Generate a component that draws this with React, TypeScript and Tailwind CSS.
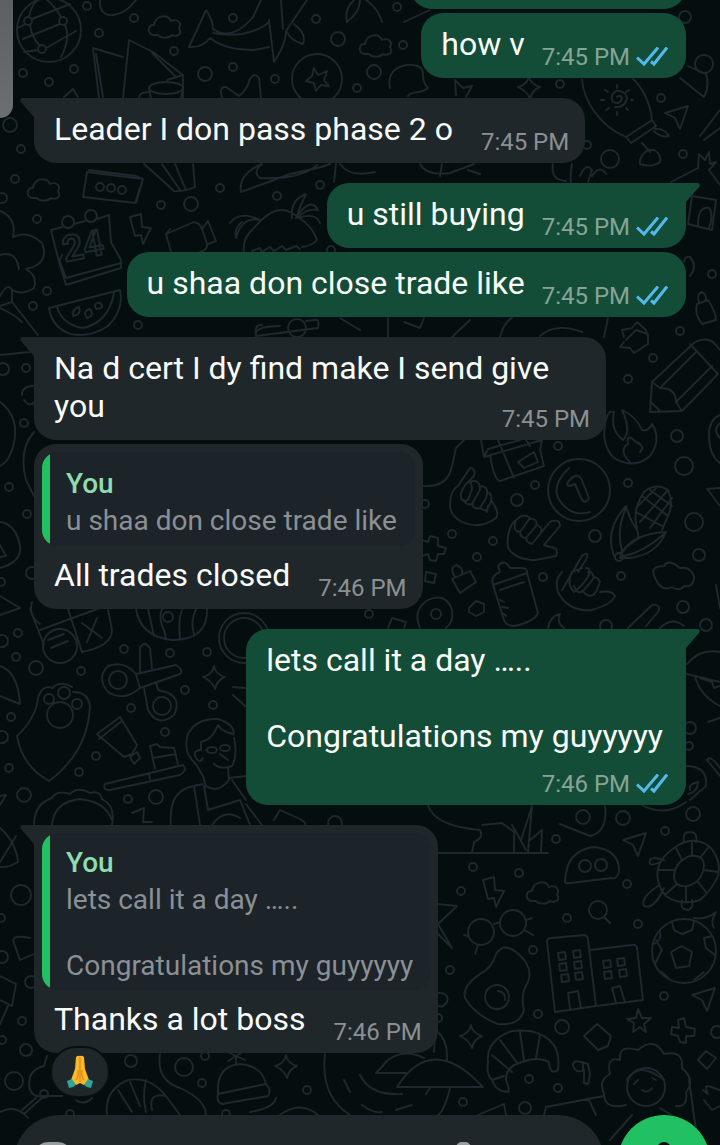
// src/App.tsx
import type { ReactNode } from 'react'

type Message = {
  id: number
  mine: boolean
  text: string
  time: string
  tail?: boolean
  stacked?: boolean
  quote?: string
  reaction?: boolean
}

const GROUPS: Message[][] = [
  [{ id: 1, mine: true, text: 'how v', time: '7:45 PM' }],
  [{ id: 2, mine: false, tail: true, text: 'Leader I don pass phase 2 o', time: '7:45 PM' }],
  [
    { id: 3, mine: true, tail: true, text: 'u still buying', time: '7:45 PM' },
    { id: 4, mine: true, text: 'u shaa don close trade like', time: '7:45 PM' },
  ],
  [
    { id: 5, mine: false, tail: true, text: 'Na d cert I dy find make I send give you', time: '7:45 PM' },
    { id: 6, mine: false, quote: 'u shaa don close trade like', text: 'All trades closed', time: '7:46 PM' },
  ],
  [{ id: 7, mine: true, tail: true, stacked: true, text: 'lets call it a day …..\n\nCongratulations my guyyyyy', time: '7:46 PM' }],
  [{ id: 8, mine: false, tail: true, reaction: true, quote: 'lets call it a day …..\n\nCongratulations my guyyyyy', text: 'Thanks a lot boss', time: '7:46 PM' }],
]

// cx, cy, r
const DOTS: [number, number, number][] = [
  [87, 6, 4], [134, 18, 4], [99, 33, 4], [174, 51, 4], [23, 73, 4], [74, 69, 4], [49, 82, 4], [205, 74, 7], [233, 67, 4],
  [275, 79, 4], [338, 39, 7], [316, 19, 4], [233, 18, 4], [10, 125, 7], [21, 149, 4], [15, 179, 4], [37, 219, 4],
  [161, 205, 4], [191, 204, 7], [220, 188, 4], [320, 185, 4], [277, 196, 4], [47, 291, 4], [33, 306, 4], [138, 325, 4],
  [357, 88, 4], [2, 198, 5], [331, 250, 4], [397, 7, 4], [403, 45, 4], [374, 72, 7], [560, 84, 4], [661, 98, 4], [685, 17, 6],
  [704, 64, 9], [587, 145, 4], [610, 159, 9], [683, 154, 4], [712, 274, 4], [680, 331, 4], [3, 369, 6], [26, 368, 4],
  [24, 423, 4], [9, 487, 4], [27, 514, 4], [32, 573, 6], [1, 582, 4], [653, 358, 4], [628, 379, 4], [677, 436, 6],
  [684, 466, 9], [558, 446, 4], [535, 485, 4], [517, 500, 6], [425, 504, 4], [452, 534, 4], [493, 541, 4], [477, 557, 4],
  [543, 577, 4], [628, 483, 4], [595, 536, 6], [694, 522, 9], [699, 555, 6], [621, 576, 4], [683, 607, 6], [369, 614, 4],
  [606, 626, 6], [706, 625, 6], [2, 641, 6], [18, 633, 4], [16, 657, 4], [36, 668, 7], [81, 671, 4], [124, 649, 4],
  [170, 653, 4], [207, 652, 4], [185, 690, 4], [131, 708, 4], [213, 705, 4], [11, 717, 4], [2, 737, 6], [9, 768, 4],
  [24, 795, 7], [96, 756, 4], [79, 772, 4], [128, 799, 4], [156, 797, 7], [165, 732, 4], [335, 823, 7], [583, 817, 7],
  [623, 818, 7], [693, 814, 7], [690, 728, 6], [689, 746, 4], [556, 839, 4], [665, 831, 4], [473, 867, 4], [519, 873, 4],
  [461, 891, 4], [567, 918, 4], [627, 884, 4], [638, 924, 4], [533, 950, 4], [450, 970, 4], [664, 996, 4], [538, 1014, 4],
  [562, 1027, 7], [529, 1079, 4], [558, 1088, 4], [463, 1102, 4], [525, 1108, 6], [717, 1032, 6], [438, 1018, 4],
  [21, 895, 10], [1, 918, 4], [31, 982, 6], [2, 957, 6], [22, 1021, 4], [2, 1040, 4], [26, 1050, 6], [14, 1081, 9],
  [131, 1061, 6], [184, 1067, 9], [205, 1056, 4], [202, 1083, 4], [307, 1090, 4], [226, 1114, 4], [70, 1114, 4],
]

const CLOUDS: [number, number][] = [[148, 15], [359, 34], [27, 178], [526, 881]]
const BOLTS: [number, number][] = [[129, 214], [482, 877]]
const STARS: [number, number][] = [[518, 76], [203, 666], [275, 1055], [460, 1025]]
const PLANES: [number, number][] = [[664, 106], [622, 833], [691, 988]]

function Wallpaper() {
  return (
    <svg
      aria-hidden="true"
      viewBox="0 0 720 1145"
      preserveAspectRatio="xMidYMin slice"
      className="absolute inset-0 h-full w-full"
      fill="none"
      stroke="#1e282d"
      strokeWidth="1.9"
      strokeLinecap="round"
      strokeLinejoin="round"
    >
      {DOTS.map(([cx, cy, r]) => <circle key={`${cx}-${cy}`} cx={cx} cy={cy} r={r} />)}
      {CLOUDS.map(([x, y]) => (
        <path key={x} transform={`translate(${x} ${y})`} d="M6 20C-1 20-1 9 6 10C7 1 19-2 23 6C30 3 34 9 31 13C35 20 28 22 24 20C20 24 12 23 10 20Z" />
      ))}
      {BOLTS.map(([x, y]) => (
        <path key={x} transform={`translate(${x} ${y})`} d="M1 3L12 0L13 13L22 14L14 30L12 21L6 22Z" />
      ))}
      {STARS.map(([x, y]) => (
        <path key={x} transform={`translate(${x} ${y})`} d="M11 0Q12 8 22 11Q14 14 12 23Q9 15 0 11Q9 9 11 0Z" />
      ))}
      {PLANES.map(([x, y]) => (
        <path key={x} transform={`translate(${x} ${y})`} d="M1 7L24 0L16 23L11 12Z" />
      ))}

      {/* globe, cards and mug */}
      <circle cx="49" cy="30" r="32" />
      <circle cx="28" cy="21" r="4" /><circle cx="42" cy="49" r="4" /><circle cx="63" cy="21" r="4" />
      <path d="M32 19L70 4M24 25L17 28M46 48L76 31M38 50L24 52M30 25Q32 38 40 46M29 17Q31 5 38 0M61 17Q54 5 47 0M65 25Q71 38 61 57M23 39L60 24" />
      <path d="M100 0C99 10 104 16 113 15C124 14 131 7 136 0" />
      <path d="M99 98L93 48L123 57M103 97L96 54M123 98L129 40L153 52L183 75L167 80M152 53L175 76M183 77L183 98M64 97L73 89L78 97" />
      <ellipse cx="166" cy="88" rx="17" ry="6" /><path d="M149 89L151 98M183 89L181 98M149 92Q139 92 139 98" />

      {/* whale */}
      <path d="M189 47L206 10Q213 20 213 29Q232 42 253 17L261 0M213 33Q228 36 242 34Q261 30 269 22M269 20L274 62Q286 44 286 31L307 0M189 47Q202 48 210 38Q225 50 254 50L269 47M281 0L283 29M287 32Q290 40 303 44Q307 34 294 24M347 22Q344 9 354 0M347 22Q360 12 360 0M382 22Q378 8 366 0" />
      <circle cx="317" cy="79" r="25" />
      <path d="M314 68L318 75L327 71L324 80L329 86L321 85L316 91L314 83L306 81L312 76Z" />
      <path d="M222 98Q219 86 226 87L239 96Q247 90 250 79Q254 72 259 78L261 98" />

      {/* leaf, surfboard, flipflops */}
      <path d="M390 88C386 70 402 62 418 66C428 72 418 78 428 88C420 95 412 90 408 96M404 22L430 10M456 95L455 80L463 88L472 86L466 97M582 80C584 100 598 125 626 137L652 120C650 100 640 85 633 79M626 137L631 143L656 126L652 120M642 143L650 152M655 129Q664 128 669 136Q660 138 654 131M640 160Q644 148 654 150Q662 154 660 162Q652 168 640 164ZM680 78L704 97Q710 86 706 74L688 66M700 136L720 110M704 140L720 128" />
      <path d="M617 97Q621 94 622 99Q619 105 613 102Q609 96 616 91Q625 90 627 98Q625 108 615 107M617 85V88M605 90L608 92M601 100H604M606 110L609 108M617 112V115M628 110L626 108M631 100H633M629 90L626 92" />

      {/* ticket, fries, shells */}
      <path d="M87 172L143 179L136 203L83 197ZM143 179L135 203M143 179L136 176L89 170" />
      <circle cx="100" cy="187" r="4" /><circle cx="111" cy="188" r="4" /><circle cx="122" cy="190" r="4" />
      <path d="M144 164Q160 178 174 191Q184 192 195 187L193 164M162 164L180 190M175 164L186 190M241 192Q238 174 262 164Q252 172 260 178Q300 180 317 165M241 192L290 174Q320 168 330 164M336 164L334 182M340 164Q350 178 375 172M420 164Q426 176 450 173L474 164M442 164L440 176M468 170L480 174M553 164Q550 180 566 181M572 164Q568 186 575 196M580 176Q586 162 592 170L588 182M592 176Q600 164 606 174" />
      <path d="M671 182L698 168L699 154L705 160L709 152L710 164L716 162L709 170L720 185M692 196L716 200L712 230L688 224ZM698 225Q698 206 709 208Q714 214 709 228" />

      {/* calendar */}
      <path d="M62 227L51 230L59 262M74 224L85 221M97 219L109 215L111 242L121 260M59 262L62 255M59 262L66 285L121 268L121 260M60 262L66 278L121 263" />
      <circle cx="68" cy="222" r="6" /><circle cx="91" cy="216" r="6" />
      <text x="65" y="262" fontFamily="Roboto" fontSize="36" fontWeight="700" transform="rotate(-11 65 262)">24</text>
      <path d="M0 211Q17 218 13 237Q28 230 42 243Q50 264 26 269Q38 276 34 288Q22 296 12 290L12 302L38 335M0 255Q16 250 19 269M12 290Q8 282 0 296M0 308Q14 314 22 322M12 302L0 306" />
      <path d="M49 308L120 290Q124 310 108 326Q90 338 71 334Q52 328 49 308ZM57 307Q62 324 82 328Q108 324 114 293M73 316Q72 309 79 307Q82 314 73 316ZM87 318Q82 311 90 309Q95 316 87 318ZM96 309Q93 302 100 303Q106 308 96 309Z" />

      {/* camera and palm */}
      <path d="M171 252L166 234L194 222Q200 223 202 229L207 244Q208 250 200 252M202 229L208 221L216 241L208 244M166 234L170 229M244 252Q242 238 254 228Q274 204 290 212Q312 224 317 240Q312 246 302 247M252 251L260 248L262 252L270 247L274 251L282 246L286 250L296 246L300 249M230 223Q240 210 260 220Q242 216 236 238Q234 228 242 222M292 218Q290 200 306 194Q300 206 296 218Q310 196 318 210Q306 208 298 218Q316 212 320 223" />
      <path d="M256 333Q258 326 280 326M256 336L318 328Q320 318 314 320L306 321M256 336Q254 324 262 325" /><circle cx="297" cy="328" r="9" />
      <path d="M340 318L360 330M388 318V337M404 322L420 328L424 318M452 337L470 320M500 337Q504 322 512 318M540 336Q556 322 582 332M608 318L604 337M624 337L622 330L632 328L637 322L646 330L648 337" />
      <path d="M697 304L708 300Q716 312 716 320L702 324Q694 314 697 304ZM699 302Q696 294 702 292Q708 296 705 301M684 262Q684 256 690 257Q698 266 690 276" />

      {/* left column beside the replies */}
      <path d="M0 355L30 352M0 402Q22 418 12 450Q8 462 0 466M34 432Q18 450 26 480L34 496M22 395Q22 386 34 386M24 400Q30 408 34 402M0 522Q16 524 20 546Q22 562 0 568M0 545L6 556L0 557M0 596L20 608L0 615M32 602Q28 616 40 624" />

      {/* puzzle and pencil */}
      <path d="M626 340L636 330L648 334L648 344L634 353L630 348L620 347L624 342M650 412L652 382L695 342Q708 336 715 344L720 350M650 412L682 411L718 374L690 344M652 382L660 388Q676 388 676 402L682 411M660 388L696 352M676 402L712 366M650 401L660 411" />
      <path d="M606 420Q600 444 614 458Q634 470 650 456Q662 440 652 424Q648 432 642 430Q636 416 622 410Q632 432 623 440Q610 430 614 412Q608 410 606 420ZM630 462Q618 450 628 444Q626 432 636 442Q646 446 640 452" />
      <path d="M720 415Q708 420 709 438Q710 456 720 463M720 423Q712 430 720 438M707 489L720 488M708 490L720 506" />

      {/* gift, coin, corn, hands */}
      <path d="M481 440L484 457L542 440L540 450L544 466L500 481Q494 480 490 455M498 440L514 478M526 440L530 446M484 457L488 449L520 440M518 462L534 452L538 462L524 468Z" />
      <path d="M422 486Q448 488 452 466L456 448L464 440" />
      <circle cx="579" cy="490" r="31" /><path d="M569 468Q552 484 558 498Q570 518 590 512M568 482Q576 472 581 478L589 498Q586 504 582 500L575 484L570 486Q566 486 568 482Z" />
      <path d="M450 505Q450 490 458 486L470 468Q476 468 474 476L468 482Q458 492 462 500Q468 504 470 494Q474 488 470 482M470 482Q480 478 480 490L472 504Q466 506 464 500M480 486Q490 486 486 498L480 508Q474 510 472 504M487 492Q494 494 490 504L486 511L480 508M488 506L487 512M491 500Q500 512 496 518Q480 530 462 522Q450 516 450 505" />
      <path d="M516 520Q506 528 508 548Q516 560 536 560L556 556Q560 548 550 547L544 545L560 526Q560 518 550 522L540 534M516 520Q524 512 530 518L520 532Q512 532 516 520M530 519Q538 518 536 526L526 538Q520 538 520 532M537 525Q544 528 540 534L532 544Q526 542 526 538" />
      <path d="M582 568L572 572Q566 584 574 592Q582 586 588 577M562 590L582 556Q590 550 586 560L578 572M588 577Q592 568 586 568M574 586Q578 596 584 590L594 578Q592 570 588 572M584 592Q590 600 596 592L600 582Q596 574 592 580M562 572Q554 580 558 592Q568 612 592 610Q612 604 615 596Q612 590 600 592" />
      <path d="M614 556Q604 530 626 506Q630 520 637 530Q640 538 636 540Q624 548 620 554M620 558Q628 534 666 532Q656 556 628 558ZM622 550Q616 530 626 508M624 556Q644 552 664 534M637 528Q632 510 644 492Q656 482 668 490Q674 504 668 516L662 530M642 496L668 516M650 490L672 506M636 512L662 526M668 490L640 522M672 498L650 528M656 488L636 508" /><circle cx="619" cy="557" r="4" />
      <path d="M422 540L428 542L430 536L438 538L438 546L446 548L444 554L438 554L436 561L430 560L428 554L422 556M452 579L470 571L476 582L460 593ZM455 577Q449 568 456 565Q464 568 462 574M426 572L436 574L434 583L425 581Z" />
      <path d="M493 585L527 573L538 613Q534 622 514 626Q506 626 504 620ZM493 585Q490 576 500 572L498 566Q504 558 510 568L520 568Q528 568 527 573M500 590L524 582M500 600L504 602M502 607L508 608M504 614L506 616" />
      <path d="M420 628Q412 610 428 600Q446 592 452 610Q454 622 446 628" /><circle cx="436" cy="614" r="5" /><path d="M469 608L476 601L484 604L484 612L476 616L469 612ZM388 628L392 618L406 622L404 628M548 628Q550 616 560 614Q556 622 564 628M628 628L652 605Q662 604 658 612L646 626M660 628Q672 616 684 626" />
      <path d="M656 580Q648 566 664 566Q668 558 680 568Q690 566 694 576Q694 588 684 586Q680 592 672 587Q662 592 656 580ZM716 585L720 608" />

      {/* shield, bandage, scissors */}
      <path d="M30 609L44 645M40 630L108 605M68 609L82 652M82 652Q112 646 112 630L108 609M82 623L102 638M97 618L87 642M48 640L64 634M51 648L68 641" /><circle cx="60" cy="646" r="17" />
      <path d="M136 609Q140 636 172 640Q208 640 207 609M148 609L154 636M162 609Q158 618 164 630L166 638M182 610Q178 620 180 638M196 609Q190 622 194 634" /><circle cx="168" cy="617" r="5" />
      <circle cx="244" cy="638" r="25" /><circle cx="244" cy="638" r="20" />
      <path d="M17 736Q36 718 38 698Q42 684 53 688M52 688Q60 680 72 687M73 692Q88 692 90 706Q88 752 49 781Q22 766 17 736" /><circle cx="60" cy="715" r="13" /><circle cx="49" cy="699" r="5" /><circle cx="64" cy="693" r="6" /><circle cx="77" cy="704" r="5" />
      <circle cx="118" cy="680" r="9" /><path d="M140 688Q124 702 108 692Q96 678 108 666Q124 660 136 674L176 665Q184 670 180 674L140 688L136 674M140 672V648Q144 640 150 648L152 668M144 688L148 710Q158 728 174 715Q182 698 166 692L158 690L156 682" /><circle cx="162" cy="706" r="9" />
      <path d="M0 666Q18 672 20 704L0 696M97 734L120 717L137 745L132 754L124 757ZM99 739L122 721M130 757L137 752L140 758L134 764ZM105 784L183 765Q188 770 180 775L110 790Q102 790 105 784ZM150 779L149 773M155 769L150 746L157 744L160 747L174 748L178 764M153 758L176 754" />
      <path d="M203 776L196 764Q182 752 188 734Q196 718 218 719Q234 724 234 734Q222 732 218 725Q212 740 201 742L201 750Q192 750 196 758Q200 764 203 758M206 750L208 752M220 754L228 760M234 738Q238 756 232 766Q220 770 214 764M203 776L206 786Q218 794 229 780L228 768M171 825Q168 790 194 786L203 784M194 786L200 825M229 778L246 776M204 786L208 810L240 800M240 800L250 825M232 780L246 800M212 825Q224 808 240 818M246 804L262 825" />
      <ellipse cx="212" cy="750" rx="5" ry="3" /><ellipse cx="225" cy="748" rx="5" ry="3" />
      <path d="M233 687L245 688M233 695L245 706M34 825Q34 804 52 798Q56 790 70 794Q78 786 90 793Q100 790 102 799Q116 806 112 825M52 825Q54 802 80 799Q106 802 112 820M132 813L144 808L143 822L152 822M274 820L280 810L300 819Q306 822 305 825M0 796L6 795L0 805M0 828Q16 842 18 862Q8 868 0 867M16 836L0 862" />

      {/* right column */}
      <path d="M687 664Q700 648 720 652M687 674L720 682M695 676Q700 696 720 706M700 678L712 682L714 688L720 686M708 722L720 718M707 760Q710 754 720 768M707 760L720 776M686 766Q708 766 706 786L690 800M690 790Q688 784 698 782Q698 792 688 794M640 804Q664 818 686 802M605 806Q608 832 590 836L560 824" />

      {/* mushroom, glasses, turtle */}
      <path d="M430 853H548M428 805Q434 826 480 830Q484 838 474 842L472 852M482 825L502 823L514 832L514 853M512 825L526 850M521 840L532 806L528 852M530 840L542 830L541 852" />
      <path d="M565 882Q566 850 594 847Q620 850 619 872Q616 880 612 878L570 883Q566 884 565 882Z" /><circle cx="585" cy="866" r="6" /><circle cx="601" cy="865" r="6" />
      <circle cx="481" cy="932" r="13" /><circle cx="513" cy="923" r="13" /><path d="M494 924L500 922M526 920L532 918M524 930L533 935M468 936L464 935M478 945L475 954M438 904L457 906L438 924L452 948L434 930" />
      <circle cx="598" cy="910" r="9" /><path d="M604 917L610 923" />
      <path d="M658 880Q654 862 674 848Q690 836 706 844Q722 856 718 876Q712 890 700 900Q680 906 666 896Q660 890 658 880ZM674 878Q674 862 690 856Q704 854 704 866Q702 882 688 886Q676 888 674 878ZM658 870L674 870M676 848L682 860M692 842V856M708 848L700 858M718 872L704 870M706 892L698 882M686 902L686 887M666 894L677 884M684 842Q682 832 690 832Q698 832 696 842M660 862Q648 868 650 860Q652 856 664 860M664 888Q654 910 644 906Q640 898 658 886M682 900Q680 910 688 910Q694 908 692 900" />
      <path d="M465 998Q462 986 480 974Q492 968 496 954Q504 942 516 952Q534 966 528 982Q520 994 524 1010Q520 1026 498 1024Q476 1016 465 998Z" /><circle cx="497" cy="997" r="12" /><path d="M498 991Q506 992 505 1000" />
      <path d="M547 942Q546 938 552 938L584 935Q588 936 588 940L596 1006L555 1012ZM590 950L632 945Q636 944 637 948L643 1000L596 1006M570 1009L568 993L578 991L581 1008M616 1003L612 988L620 986L625 1002" />
      {[[558, 953], [573, 951], [559, 964], [574, 962], [561, 975], [575, 973], [603, 961], [617, 959], [604, 972], [619, 970]].map(([x, y]) => (
        <path key={`${x}-${y}`} transform={`translate(${x} ${y})`} d="M0 0L7-1L8 6L1 7Z" />
      ))}
      <circle cx="684" cy="951" r="32" /><path d="M671 952L682 946L692 952L689 966L676 968ZM672 922L674 930L682 934L692 930L694 922M654 944Q662 940 660 932M655 964L662 950L656 940M668 978L662 972M694 980L704 972M716 956L706 948L704 938L712 936M694 918Q706 920 716 912Q710 922 714 928" />
      <path d="M638 1009L642 1018L651 1018L644 1024L646 1032L640 1027L633 1032L634 1023L627 1019L636 1018ZM678 1020L684 1018L686 1027L695 1029L694 1036L686 1036L686 1043L680 1042L678 1036L671 1034L672 1027L679 1028ZM584 1036L597 1024L611 1036L608 1046L598 1050ZM698 1060L706 1051L716 1058L707 1069ZM703 1090L708 1094Q704 1086 708 1086L720 1090M704 1100L712 1110L720 1106" />

      {/* croissant, lily pads, portrait */}
      <path d="M488 1062Q486 1040 512 1031Q540 1028 553 1044Q560 1052 558 1070Q550 1076 549 1062M549 1062Q538 1056 522 1062Q506 1066 506 1080Q510 1090 508 1092Q496 1092 492 1080Q486 1074 488 1062M492 1055L512 1072M500 1040L518 1064M520 1032L524 1060M540 1035L536 1058M492 1080L504 1076" />
      <path d="M573 1066Q572 1058 588 1064L590 1074L588 1084L584 1083L584 1070Q576 1074 573 1066ZM583 1062V1070" />
      <path d="M397 1087Q432 1032 483 1087ZM376 1073L388 1060Q404 1048 424 1058M376 1073H406M434 1052Q434 1040 436 1030Q448 1040 447 1060M436 993Q450 992 447 1002Q442 1010 436 1004M360 1075Q370 1096 402 1094M362 1105Q374 1114 382 1112M396 1110L412 1105M430 1088L426 1094M450 1088Q444 1112 438 1115M478 1115L504 1104L506 1115M544 1115L546 1107L604 1096M588 1098L596 1115" />
      <circle cx="646" cy="1087" r="19" /><path d="M626 1105Q604 1110 604 1094Q598 1080 610 1074Q606 1056 620 1060Q618 1044 638 1050Q654 1036 664 1054Q684 1050 682 1068Q696 1080 686 1092Q688 1108 676 1106M627 1080Q638 1060 664 1080M638 1080L634 1084M652 1078L656 1080M642 1090Q648 1094 652 1088M689 1080L696 1130M610 1140L632 1115M660 1108L690 1126" />

      {/* bottom left: shrimp, hat, cherries */}
      <path d="M14 943Q10 934 30 938M14 943L20 960L34 954M0 976L16 984L12 1006L0 1000M8 1006L0 1024" />
      <path d="M47 1056L44 1066Q26 1070 30 1090Q34 1098 44 1096L62 1096M44 1096L24 1114M36 1098L22 1110M0 1112Q16 1104 28 1118M76 1100Q84 1106 92 1098" /><circle cx="44" cy="1094" r="4" />
      <path d="M107 1115Q104 1090 128 1080Q150 1076 166 1096L180 1115M118 1090L132 1112M130 1082L140 1106M146 1080Q142 1096 146 1112M152 1110Q148 1092 166 1096M160 1054Q156 1080 180 1088Q206 1100 206 1115M218 1094Q216 1066 240 1064Q262 1066 266 1084M218 1094L266 1084Q272 1090 268 1096L222 1104Q216 1102 218 1094M250 1112Q274 1108 276 1098M280 1115Q300 1100 318 1115M325 1054Q320 1096 350 1115M344 1080L350 1092" />
      <path d="M236 1056L228 1052M236 1056L245 1060M236 1056L236 1065M236 1056L228 1061M236 1056L244 1051" />
    </svg>
  )
}

function Ticks() {
  return (
    <svg viewBox="0 0 32 20" className="h-5 w-8" fill="none" stroke="#53b9ea" strokeWidth="3" role="img" aria-label="Read">
      <path d="M1 10.5L8 17L22 0.5M15 14.5L18 17L31 0.5" />
    </svg>
  )
}

function Tail({ mine }: { mine: boolean }) {
  return mine ? (
    <svg aria-hidden="true" viewBox="0 0 16 20" className="absolute -right-3.5 top-0 h-5 w-4">
      <path d="M0 0H14Q17 1 15 4L2 19H0Z" fill="#144d37" />
    </svg>
  ) : (
    <svg aria-hidden="true" viewBox="0 0 16 20" className="absolute -left-3.5 top-0 h-5 w-4">
      <path d="M16 0H2Q-1 1 1 4L14 19H16Z" fill="#1f272a" />
    </svg>
  )
}

function Quote({ text }: { text: string }) {
  return (
    <div className="m-2 mb-2.5 flex min-h-[94px] overflow-hidden rounded-2xl bg-[#1c2329]">
      <span className="w-2 shrink-0 bg-[#21c063]" />
      <div className="flex flex-col justify-center gap-1 pt-[13px] pr-4 pb-2 pl-4 text-[28px] leading-[33px]">
        <p className="font-medium text-[#8fdcae]">You</p>
        <p className="whitespace-pre-line text-[#8a9095]">{text}</p>
      </div>
    </div>
  )
}

function Reaction() {
  return (
    <button
      type="button"
      aria-label="Folded hands"
      className="absolute -bottom-[45px] left-4 flex h-[52px] w-[60px] items-center justify-center rounded-full border-2 border-[#070f10] bg-[#1f272a]"
    >
      <svg viewBox="0 0 26 34" className="h-[34px] w-[26px]" aria-hidden="true">
        <path d="M9 2Q11 0 13 1Q15 0 17 2L18 14L22 25L17 30L13 28L9 30L4 25L8 14Z" fill="#fbb928" />
        <path d="M13 2V27M9 25Q12 22 11 15M17 25Q14 22 15 15" fill="none" stroke="#d9851c" strokeWidth="1.2" />
        <path d="M0 26L5 24L9 30Q6 33 2 33Z" fill="#2fa69a" />
        <path d="M26 26L21 24L17 30Q20 33 24 33Z" fill="#2fa69a" />
      </svg>
    </button>
  )
}

function Meta({ msg }: { msg: Message }) {
  const place = msg.stacked ? 'mt-[15px] flex justify-end' : msg.mine ? 'float-right mt-[18px] ml-[17px] flex' : 'float-right mt-[18px] ml-7 flex'
  return (
    <span className={`${place} items-center gap-1.5 text-2xl leading-7 whitespace-nowrap`}>
      <time className={msg.mine ? 'text-[#86a497]' : 'text-[#8b9093]'}>{msg.time}</time>
      {msg.mine && <Ticks />}
    </span>
  )
}

function Bubble({ msg }: { msg: Message }) {
  const side = msg.mine ? 'self-end bg-[#144d37]' : 'self-start bg-[#1f272a]'
  const corner = !msg.tail ? '' : msg.mine ? 'rounded-tr-none' : 'rounded-tl-none'
  return (
    <article className={`relative max-w-[572px] rounded-[22px] ${side} ${corner}`}>
      {msg.tail && <Tail mine={msg.mine} />}
      {msg.quote && <div className="flow-root"><Quote text={msg.quote} /></div>}
      <div className={`flow-root pb-[7px] pl-5 ${msg.mine ? 'pr-[18px]' : 'pr-4'} ${msg.quote ? '' : 'pt-3'}`}>
        <p className={`text-[32px] leading-[38px] whitespace-pre-line text-[#f8fbfa] ${msg.stacked ? 'pr-[5px]' : ''}`}>
          {msg.text}
          {!msg.stacked && <Meta msg={msg} />}
        </p>
        {msg.stacked && <Meta msg={msg} />}
      </div>
      {msg.reaction && <Reaction />}
    </article>
  )
}

function Group({ children }: { children: ReactNode }) {
  return <section className="flex flex-col gap-1">{children}</section>
}

function Composer() {
  return (
    <footer className="relative flex shrink-0 items-start gap-3.5 pr-2.5 pl-3.5">
      <div className="flex h-[92px] min-w-0 flex-1 items-center gap-4 rounded-full bg-[#1f272a] px-5">
        <button type="button" aria-label="Emoji" className="shrink-0">
          <svg viewBox="0 0 38 38" className="h-[38px] w-[38px]" fill="none" stroke="#9a9ea0" strokeWidth="4" aria-hidden="true">
            <rect x="2" y="2" width="34" height="34" rx="12" />
            <path d="M11 22Q19 31 27 22" />
          </svg>
        </button>
        <input aria-label="Message" className="min-w-0 flex-1 bg-transparent text-[32px] text-white outline-none" />
        <button type="button" aria-label="Attach" className="mr-[102px] shrink-0">
          <svg viewBox="0 0 38 38" className="h-[38px] w-[38px]" fill="none" stroke="#9a9ea0" strokeWidth="4" aria-hidden="true">
            <path d="M12 12V26A7 8 0 0 0 26 26V8A6 6 0 0 0 13 8" />
          </svg>
        </button>
      </div>
      <button type="button" aria-label="Voice message" className="flex h-[92px] w-[92px] shrink-0 items-center justify-center rounded-full bg-[#21c063]">
        <svg viewBox="0 0 40 40" className="h-10 w-10" fill="#0b1013" aria-hidden="true">
          <rect x="13" y="1" width="14" height="24" rx="7" />
          <path d="M6 18H9A11 11 0 0 0 31 18H34A14 14 0 0 1 22 32V38H18V32A14 14 0 0 1 6 18Z" />
        </svg>
      </button>
    </footer>
  )
}

export default function App() {
  return (
    <div className="relative flex h-screen flex-col overflow-hidden bg-[#050e0f] font-[Roboto,'Liberation_Sans',sans-serif]">
      <Wallpaper />
      <main className="relative -mt-14 flex shrink-0 flex-col gap-5 px-[34px] pb-[62px]">
        <Group>
          {/* previous message, scrolled out of view */}
          <div className="h-[65px] w-[276px] self-end rounded-[22px] bg-[#144d37]" />
          {GROUPS[0].map(m => <Bubble key={m.id} msg={m} />)}
        </Group>
        {GROUPS.slice(1).map(group => (
          <Group key={group[0].id}>
            {group.map(m => <Bubble key={m.id} msg={m} />)}
          </Group>
        ))}
      </main>
      <Composer />
      <div className="absolute top-0 left-0 h-[118px] w-[13px] rounded-br-[13px] bg-linear-to-b from-[#5d6062] to-[#6c6f71]" />
    </div>
  )
}
